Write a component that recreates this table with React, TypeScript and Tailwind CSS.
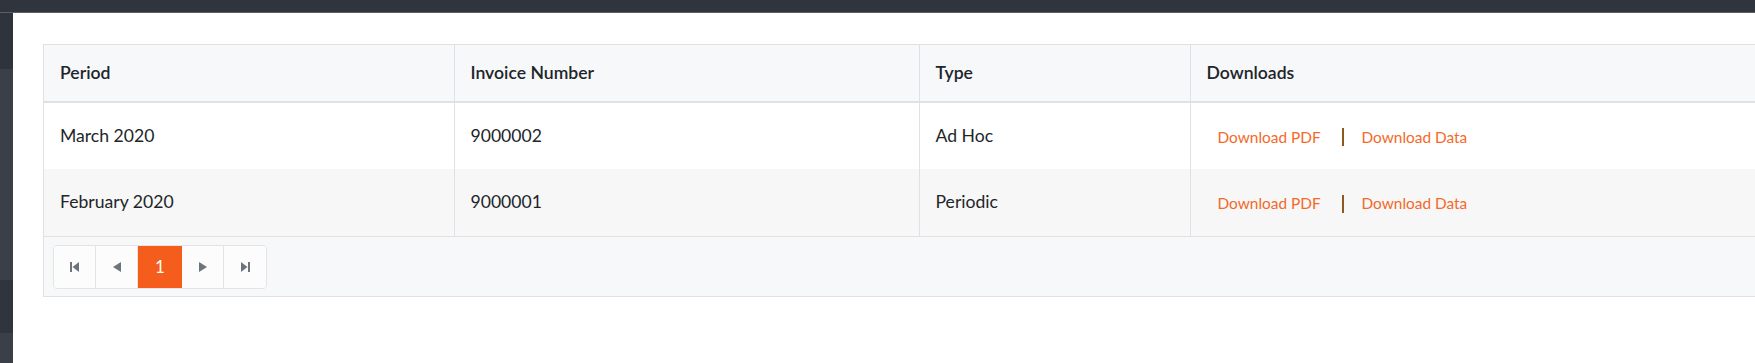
import React from 'react'

const rows = [
  { period: 'March 2020', invoice: '9000002', type: 'Ad Hoc' },
  { period: 'February 2020', invoice: '9000001', type: 'Periodic' },
]

const font = { fontFamily: '"Segoe UI", Lato, "Noto Sans", sans-serif' }

const PageBtn: React.FC<{ children: React.ReactNode; active?: boolean; last?: boolean }> = ({
  children,
  active,
  last,
}) => (
  <button
    type="button"
    className={
      active
        ? 'flex h-[42px] w-[44px] items-center justify-center bg-[#f55d1c] text-[17px] text-white'
        : 'flex h-[42px] w-[42px] items-center justify-center bg-[#fcfcfc] text-[#6c757d] ' +
          (last ? '' : 'border-r border-[#e4e4e4]')
    }
  >
    {children}
  </button>
)

const FirstIcon = () => (
  <svg width="9" height="10" viewBox="0 0 9 10" fill="#6c757d">
    <rect x="0" y="0" width="2" height="10" />
    <path d="M9 0 L2.5 5 L9 10 Z" />
  </svg>
)
const PrevIcon = () => (
  <svg width="8" height="10" viewBox="0 0 8 10" fill="#6c757d">
    <path d="M8 0 L0 5 L8 10 Z" />
  </svg>
)
const NextIcon = () => (
  <svg width="8" height="10" viewBox="0 0 8 10" fill="#6c757d">
    <path d="M0 0 L8 5 L0 10 Z" />
  </svg>
)
const LastIcon = () => (
  <svg width="9" height="10" viewBox="0 0 9 10" fill="#6c757d">
    <path d="M0 0 L6.5 5 L0 10 Z" />
    <rect x="7" y="0" width="2" height="10" />
  </svg>
)

export default function App() {
  return (
    <div className="flex h-[363px] w-[1755px] flex-col overflow-hidden bg-white" style={font}>
      <div className="h-[12px] bg-[#30343d]" />
      <div className="h-px bg-[#5c6168]" />
      <div className="flex flex-1">
        <div className="flex w-[13px] flex-col">
          <div className="h-[56px] bg-[#2f333b]" />
          <div className="h-[211px] bg-[#3b3f47]" />
          <div className="h-[53px] bg-[#30343c]" />
          <div className="flex-1 bg-[#3b3f47]" />
        </div>
        <div className="flex-1 overflow-hidden pl-[30px] pt-[31px]">
          <div className="w-[1800px] border border-[#dfe1e4]">
            <table className="w-full table-fixed border-collapse text-[17.6px] text-[#212529]">
              <colgroup>
                <col className="w-[410px]" />
                <col className="w-[465px]" />
                <col className="w-[271px]" />
                <col />
              </colgroup>
              <thead>
                <tr className="h-[57px] border-b-2 border-[#dfe1e4] bg-[#f7f8f9]">
                  {['Period', 'Invoice Number', 'Type', 'Downloads'].map((h, i) => (
                    <th
                      key={h}
                      className={
                        'px-[16px] text-left font-semibold ' + (i < 3 ? 'border-r border-[#dfe1e4]' : '')
                      }
                    >
                      {h}
                    </th>
                  ))}
                </tr>
              </thead>
              <tbody>
                {rows.map((r, i) => (
                  <tr key={r.invoice} className={i % 2 ? 'h-[67px] bg-[#f7f7f7]' : 'h-[67px] bg-white'}>
                    <td className="border-r border-[#dfe1e4] px-[16px]">{r.period}</td>
                    <td className="border-r border-[#dfe1e4] px-[16px]">{r.invoice}</td>
                    <td className="border-r border-[#dfe1e4] px-[16px]">{r.type}</td>
                    <td className="px-[16px] pt-[3px]">
                      <div className="flex items-center whitespace-nowrap pl-[11px] text-[15.4px] text-[#f4692a]">
                        <a href="#" className="w-[124px] shrink-0">
                          Download PDF
                        </a>
                        <span className="mr-[18px] inline-block h-[18px] w-[2px] shrink-0 bg-[#8c5a1e]" />
                        <a href="#">Download Data</a>
                      </div>
                    </td>
                  </tr>
                ))}
              </tbody>
            </table>
            <div className="h-[60px] border-t border-[#dfe1e4] bg-[#f7f8f9] pl-[9px] pt-[8px]">
              <div className="flex w-fit overflow-hidden rounded-[4px] border border-[#e4e4e4]">
                <PageBtn>
                  <FirstIcon />
                </PageBtn>
                <PageBtn>
                  <PrevIcon />
                </PageBtn>
                <PageBtn active>1</PageBtn>
                <PageBtn>
                  <NextIcon />
                </PageBtn>
                <PageBtn last>
                  <LastIcon />
                </PageBtn>
              </div>
            </div>
          </div>
        </div>
      </div>
    </div>
  )
}
